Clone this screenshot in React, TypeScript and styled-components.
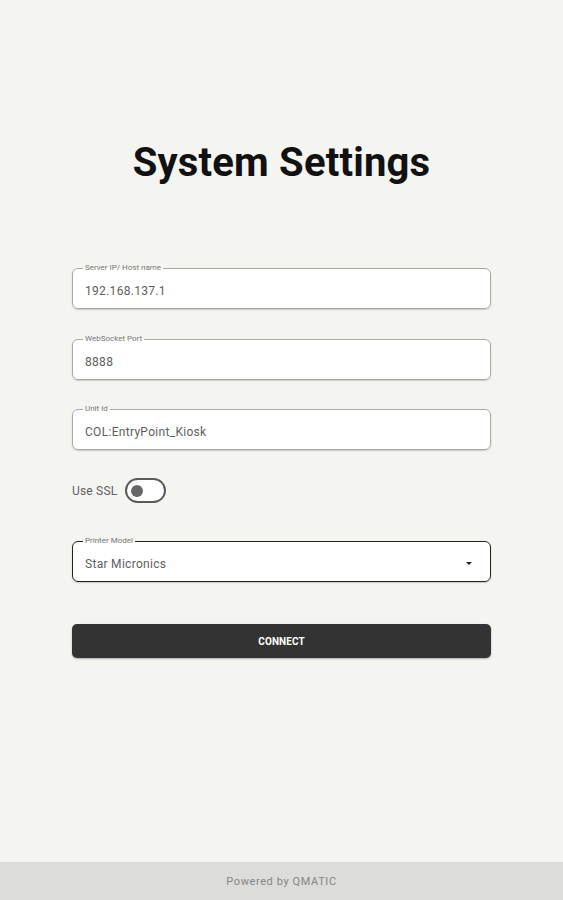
import React from 'react'
import styled, { createGlobalStyle } from 'styled-components'

const GlobalStyle = createGlobalStyle`
  html, body {
    margin: 0;
    padding: 0;
    background: #f4f4f1;
    font-family: Roboto, "Liberation Sans", sans-serif;
  }
`

const Page = styled.div`
  min-height: 100vh;
  display: flex;
  flex-direction: column;
  background: #f4f4f1;
`

const Main = styled.main`
  flex: 1;
  padding: 0 72px;
`

const Title = styled.h1`
  margin: 138px 0 0;
  text-align: center;
  font-size: 40px;
  font-weight: 700;
  line-height: 50px;
  color: #111;
  letter-spacing: 0.2px;
`

const Form = styled.div`
  margin-top: 75px;
  display: flex;
  flex-direction: column;
`

const Field = styled.fieldset<{ $focused?: boolean; $gap?: number }>`
  margin: 0 0 ${(p) => p.$gap ?? 24}px;
  padding: 0 12px;
  min-width: 0;
  border: 1px solid ${(p) => (p.$focused ? '#222' : '#a8a8a8')};
  border-radius: 6px;
  background: #fff;
  box-shadow: 0 1px 1.5px rgba(0, 0, 0, 0.18);
`

const Legend = styled.legend`
  font-size: 8px;
  line-height: 10px;
  color: #777;
  padding: 0 2px;
  margin-left: -2px;
`

const Row = styled.div`
  height: 35px;
  display: flex;
  align-items: center;
`

const Value = styled.div`
  flex: 1;
  font-size: 12px;
  color: #5e5e5e;
  letter-spacing: 0.3px;
`

const Caret = styled.span`
  width: 0;
  height: 0;
  border-left: 3px solid transparent;
  border-right: 3px solid transparent;
  border-top: 3px solid #222;
  margin-right: 6px;
`

const SwitchRow = styled.div`
  display: flex;
  align-items: center;
  gap: 8px;
  height: 25px;
  margin: 0 0 33px;
`

const SwitchLabel = styled.span`
  font-size: 12px;
  color: #5e5e5e;
  letter-spacing: 0.2px;
`

const Track = styled.div`
  width: 41px;
  height: 25px;
  box-sizing: border-box;
  border: 2px solid #5a5a5a;
  border-radius: 13px;
  background: #fff;
  display: flex;
  align-items: center;
  padding-left: 4px;
`

const Thumb = styled.div`
  width: 12px;
  height: 12px;
  border-radius: 50%;
  background: #666;
`

const ConnectButton = styled.button`
  margin-top: 42px;
  height: 34px;
  width: 100%;
  border: none;
  border-radius: 5px;
  background: #333;
  color: #fff;
  font-family: Roboto, "Liberation Sans", sans-serif;
  font-size: 10px;
  font-weight: 700;
  letter-spacing: 0.1px;
  box-shadow: 0 1px 2px rgba(0, 0, 0, 0.3);
`

const Footer = styled.footer`
  height: 38px;
  background: #dcdcdb;
  display: flex;
  align-items: center;
  justify-content: center;
  font-size: 11px;
  color: #858585;
  letter-spacing: 0.6px;
`

const fields = [
  { label: 'Server IP/ Host name', value: '192.168.137.1', gap: 25 },
  { label: 'WebSocket Port', value: '8888', gap: 24 },
  { label: 'Unit Id', value: 'COL:EntryPoint_Kiosk', gap: 28 },
]

const App: React.FC = () => {
  return (
    <>
      <GlobalStyle />
      <Page>
        <Main>
          <Title>System Settings</Title>
          <Form>
            {fields.map((f) => (
              <Field key={f.label} $gap={f.gap}>
                <Legend>{f.label}</Legend>
                <Row>
                  <Value>{f.value}</Value>
                </Row>
              </Field>
            ))}
            <SwitchRow>
              <SwitchLabel>Use SSL</SwitchLabel>
              <Track>
                <Thumb />
              </Track>
            </SwitchRow>
            <Field $focused $gap={0}>
              <Legend>Printer Model</Legend>
              <Row>
                <Value>Star Micronics</Value>
                <Caret />
              </Row>
            </Field>
            <ConnectButton>CONNECT</ConnectButton>
          </Form>
        </Main>
        <Footer>Powered by QMATIC</Footer>
      </Page>
    </>
  )
}

export default App
